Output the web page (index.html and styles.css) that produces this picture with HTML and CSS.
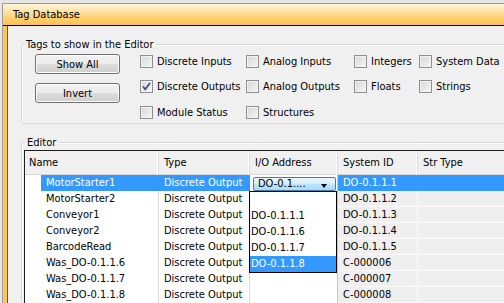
FILE: index.html
```html
<!DOCTYPE html>
<html lang="en">
<head>
    <meta charset="UTF-8">
    <title>Tag Database</title>
    <link rel="stylesheet" href="styles.css">
</head>
<body>

    <div class="window">
        <div class="titlebar">Tag Database</div>
        <div class="frame">
            <div class="client">

                <fieldset class="group tags-group">
                    <legend>Tags to show in the Editor</legend>
                    <div class="tags-body">
                        <div class="buttons">
                            <button class="btn">Show All</button>
                            <button class="btn">Invert</button>
                        </div>
                        <div class="checks">
                            <label class="check"><span class="box"></span>Discrete Inputs</label>
                            <label class="check"><span class="box"></span>Analog Inputs</label>
                            <label class="check"><span class="box"></span>Integers</label>
                            <label class="check"><span class="box"></span>System Data</label>

                            <label class="check"><span class="box"><svg width="11" height="11" viewBox="0 0 11 11"><path d="M2 5.5 L4.3 8.3 L9 2" fill="none" stroke="#3f4f85" stroke-width="1.7"/></svg></span>Discrete Outputs</label>
                            <label class="check"><span class="box"></span>Analog Outputs</label>
                            <label class="check"><span class="box"></span>Floats</label>
                            <label class="check"><span class="box"></span>Strings</label>

                            <label class="check"><span class="box"></span>Module Status</label>
                            <label class="check"><span class="box"></span>Structures</label>
                        </div>
                    </div>
                </fieldset>

                <fieldset class="group editor-group">
                    <legend>Editor</legend>
                    <div class="grid">
                        <div class="row head">
                            <div class="hcell first">Name</div>
                            <div class="hcell">Type</div>
                            <div class="hcell">I/O Address</div>
                            <div class="hcell">System ID</div>
                            <div class="hcell last">Str Type</div>
                        </div>

                        <div class="row selected">
                            <div class="cell indent"></div>
                            <div class="cell name">MotorStarter1</div>
                            <div class="cell type">Discrete Output</div>
                            <div class="cell io">
                                <div class="combo"><span>DO-0.1....</span><span class="arrow"></span></div>
                            </div>
                            <div class="cell ro">DO-0.1.1.1</div>
                            <div class="cell ro last"></div>
                        </div>
                        <div class="row">
                            <div class="cell indent"></div>
                            <div class="cell name">MotorStarter2</div>
                            <div class="cell type">Discrete Output</div>
                            <div class="cell io"></div>
                            <div class="cell ro">DO-0.1.1.2</div>
                            <div class="cell ro last"></div>
                        </div>
                        <div class="row">
                            <div class="cell indent"></div>
                            <div class="cell name">Conveyor1</div>
                            <div class="cell type">Discrete Output</div>
                            <div class="cell io"></div>
                            <div class="cell ro">DO-0.1.1.3</div>
                            <div class="cell ro last"></div>
                        </div>
                        <div class="row">
                            <div class="cell indent"></div>
                            <div class="cell name">Conveyor2</div>
                            <div class="cell type">Discrete Output</div>
                            <div class="cell io"></div>
                            <div class="cell ro">DO-0.1.1.4</div>
                            <div class="cell ro last"></div>
                        </div>
                        <div class="row">
                            <div class="cell indent"></div>
                            <div class="cell name">BarcodeRead</div>
                            <div class="cell type">Discrete Output</div>
                            <div class="cell io"></div>
                            <div class="cell ro">DO-0.1.1.5</div>
                            <div class="cell ro last"></div>
                        </div>
                        <div class="row">
                            <div class="cell indent"></div>
                            <div class="cell name">Was_DO-0.1.1.6</div>
                            <div class="cell type">Discrete Output</div>
                            <div class="cell io"></div>
                            <div class="cell ro">C-000006</div>
                            <div class="cell ro last"></div>
                        </div>
                        <div class="row">
                            <div class="cell indent"></div>
                            <div class="cell name">Was_DO-0.1.1.7</div>
                            <div class="cell type">Discrete Output</div>
                            <div class="cell io"></div>
                            <div class="cell ro">C-000007</div>
                            <div class="cell ro last"></div>
                        </div>
                        <div class="row">
                            <div class="cell indent"></div>
                            <div class="cell name">Was_DO-0.1.1.8</div>
                            <div class="cell type">Discrete Output</div>
                            <div class="cell io"></div>
                            <div class="cell ro">C-000008</div>
                            <div class="cell ro last"></div>
                        </div>

                        <!-- open drop-down of the I/O Address combo -->
                        <ul class="droplist">
                            <li>&nbsp;</li>
                            <li>DO-0.1.1.1</li>
                            <li>DO-0.1.1.6</li>
                            <li>DO-0.1.1.7</li>
                            <li class="on">DO-0.1.1.8</li>
                        </ul>
                    </div>
                </fieldset>

            </div>
        </div>
    </div>

</body>
</html>
```

FILE: styles.css
```css
html, body {
    height: 100%;
}
body {
    margin: 0;
    background-color: #e6e6e6;
    font-family: "DejaVu Sans Condensed", "DejaVu Sans", sans-serif;
    font-stretch: condensed;
    font-size: 11px;
    color: #000;
    overflow: hidden;
}
.window {
    margin: 3px 0 0 2px;
    border-left: 1px solid #9c9c9c;
    border-top: 1px solid #9c9c9c;
    height: calc(100% - 4px);
    display: flex;
    flex-direction: column;
    overflow: hidden;
}
.titlebar {
    height: 21px;
    line-height: 21px;
    padding-left: 10px;
    border-bottom: 1px solid #000;
    background: linear-gradient(#fff4da 0%, #ffe3a6 35%, #ffcb66 75%, #ffc155 100%);
}
.frame {
    flex: 1;
    display: flex;
    min-height: 0;
    border-left: 4px solid #ffc45c;
}
.client {
    flex: 1;
    border-left: 1px solid #5c5c5c;
    background-color: #f0f0f0;
    overflow: hidden;
}

/* group boxes */
.group {
    border: 1px solid #d5d8da;
    border-radius: 3px;
    box-shadow: inset 1px 1px 0 #fff;
    margin: 0 -20px 0 13px;
    padding: 0 0 0 2px;
    min-width: 0;
}
.group legend {
    padding: 0 2px;
    line-height: 13px;
    height: 13px;
}
.tags-group {
    margin-top: 12px;
}
.editor-group {
    margin-top: 12px;
}
.editor-group legend {
    margin-left: 1px;
}

.tags-body {
    display: flex;
    height: 72px;
}
.buttons {
    display: flex;
    flex-direction: column;
    gap: 9px;
    margin: 3px 0 0 11px;
}
.btn {
    width: 85px;
    height: 20px;
    padding: 0;
    font: inherit;
    color: #000;
    border: 1px solid #707070;
    border-radius: 3px;
    background: linear-gradient(#f2f2f2 0%, #ebebeb 50%, #dddddd 51%, #cfcfcf 100%);
    box-shadow: inset 0 0 0 1px #fcfcfc;
}
.checks {
    display: grid;
    grid-template-columns: 106px 108px 65px auto;
    grid-template-rows: 20px 20px 20px;
    row-gap: 5.5px;
    margin-left: 20px;
}
.check {
    display: flex;
    align-items: center;
    gap: 4px;
    white-space: nowrap;
}
.box {
    width: 13px;
    height: 13px;
    box-sizing: border-box;
    border: 1px solid #8e8f8f;
    background: linear-gradient(135deg, #d6d6d6, #f7f7f7);
    box-shadow: inset 0 0 0 1px #f2f2f2;
    display: flex;
    align-items: center;
    justify-content: center;
    flex: none;
}

/* editor grid */
.grid {
    position: relative;
    margin: 1px 0 0 0;
    border-left: 1px solid #1e1e1e;
    border-top: 1px solid #1e1e1e;
    background-color: #fff;
}
.row {
    display: grid;
    grid-template-columns: 16px 118px 91px 88px 80px 1fr;
    height: 16px;
    line-height: 16px;
}
.row.head {
    grid-template-columns: 134px 91px 88px 80px 1fr;
    height: 24px;
    line-height: 24px;
    background-color: #f0f0f0;
    border-bottom: 1px solid #d5d5d5;
    box-sizing: border-box;
}
.hcell {
    padding-left: 5px;
    border-right: 1px solid #dcdcdc;
    box-shadow: inset -1px 0 0 #fff;
    white-space: nowrap;
}
.hcell.first {
    padding-left: 4px;
}
.hcell.last {
    border-right: none;
    box-shadow: none;
}
.cell {
    box-sizing: border-box;
    white-space: nowrap;
    overflow: hidden;
}
.name {
    padding-left: 5px;
    border-right: 1px solid #d8d8d8;
}
.type {
    padding-left: 5px;
    border-right: 1px solid #d8d8d8;
}
.io {
    border-right: 1px solid #c8c8c8;
}
.ro {
    padding-left: 5px;
    background-color: #efefef;
    border-bottom: 1px solid #fbfbfb;
    border-right: 1px solid #fbfbfb;
}
.ro.last {
    border-right: none;
}
.selected .name,
.selected .type,
.selected .ro {
    background-color: #3399ff;
    color: #fff;
    border-color: #3399ff;
}
.combo {
    margin: 2px 1px 0 3px;
    height: 14px;
    box-sizing: border-box;
    border: 1px solid #3c7fb1;
    border-radius: 2px;
    background: linear-gradient(#eaf6fd 0%, #d9f0fc 45%, #bee6fd 50%, #a7d9f5 100%);
    display: flex;
    align-items: center;
    justify-content: space-between;
    padding: 0 8px 0 4px;
    line-height: 12px;
}
.arrow {
    width: 0;
    height: 0;
    margin-top: 4px;
    border-left: 3.5px solid transparent;
    border-right: 3.5px solid transparent;
    border-top: 4px solid #000;
}
.droplist {
    position: absolute;
    left: 224px;
    top: 40px;
    width: 88px;
    margin: 0;
    padding: 0;
    list-style: none;
    box-sizing: border-box;
    border: 1px solid #000;
    background-color: #fff;
}
.droplist li {
    height: 16px;
    line-height: 16px;
    padding-left: 1px;
}
.droplist li.on {
    background-color: #3399ff;
    color: #fff;
}
```
